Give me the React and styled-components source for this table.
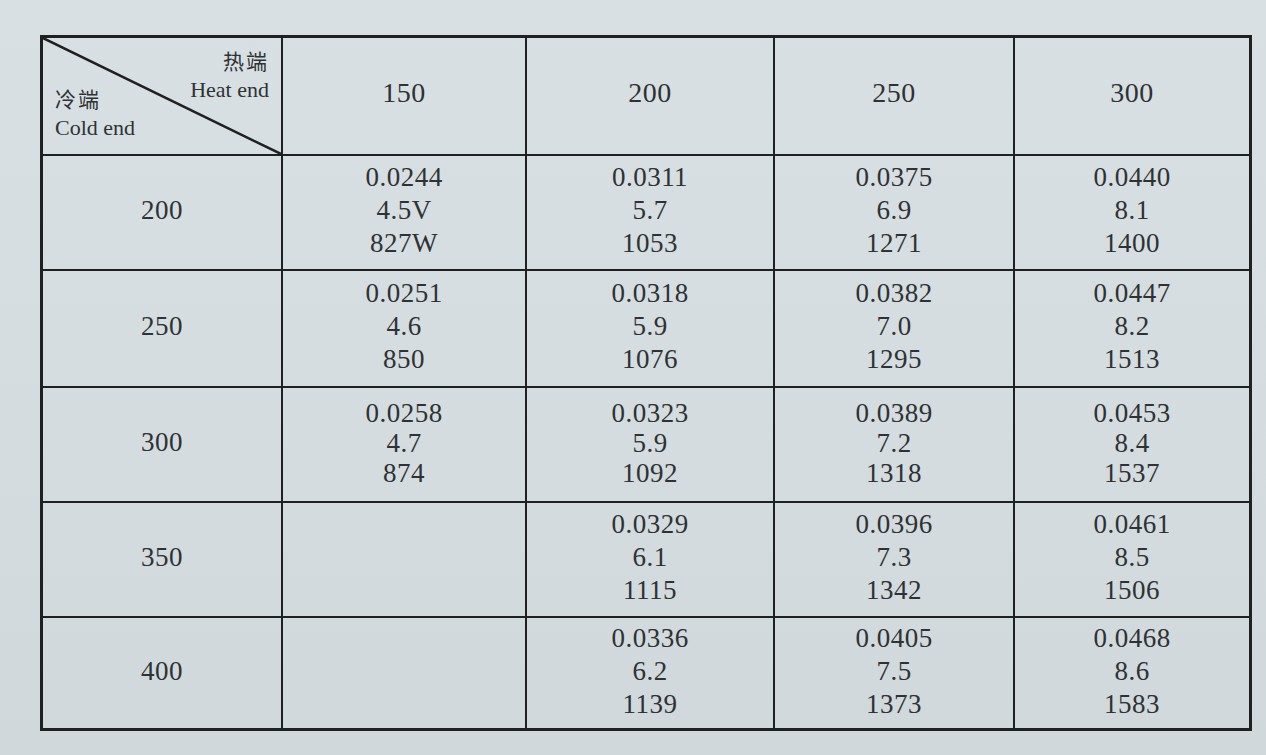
import React from "react";
import styled, { createGlobalStyle } from "styled-components";

const GlobalStyle = createGlobalStyle`
  html, body {
    margin: 0;
    padding: 0;
    background: #d6dee1;
  }
  body {
    width: 1266px;
    height: 755px;
    overflow: hidden;
    font-family: "Liberation Serif", "Noto Sans CJK SC", serif;
    color: #2f3234;
  }
`;

const Page = styled.div`
  width: 1266px;
  height: 755px;
  padding: 35px 14px 0 40px;
  box-sizing: border-box;
  background: linear-gradient(180deg, #d9e0e3 0%, #d4dcdf 60%, #d0d8db 100%);
`;

const Table = styled.div`
  display: grid;
  grid-template-columns: 240px 244px 248px 240px 1fr;
  grid-template-rows: 118px 115px 117px 115px 115px 110px;
  border: 3px solid #1e2022;
  box-sizing: border-box;
  width: 1212px;
`;

const Cell = styled.div`
  position: relative;
  display: flex;
  flex-direction: column;
  align-items: center;
  justify-content: center;
  border-right: ${(p) => (p.$last ? "none" : "2px solid #1e2022")};
  border-bottom: ${(p) => (p.$bottom ? "none" : "2px solid #1e2022")};
  font-size: 27px;
  line-height: ${(p) => (p.$tight ? "30px" : "33px")};
  letter-spacing: 0.5px;
  padding-bottom: 4px;
`;

const HeadCell = styled(Cell)`
  font-size: 28px;
  padding-bottom: 8px;
`;

const Corner = styled.div`
  position: relative;
  border-right: 2px solid #1e2022;
  border-bottom: 2px solid #1e2022;
  display: grid;
  grid-template-columns: 1fr 1fr;
  padding: 8px 12px 0 12px;
  font-size: 22px;
  line-height: 29px;
`;

const Diagonal = styled.svg`
  position: absolute;
  inset: 0;
  width: 100%;
  height: 100%;
`;

const CornerLabel = styled.div`
  display: flex;
  flex-direction: column;
  align-items: ${(p) => (p.$right ? "flex-end" : "flex-start")};
  margin-top: ${(p) => (p.$right ? "0" : "38px")};
  white-space: nowrap;
`;

const Cjk = styled.span`
  font-family: "Noto Sans CJK SC", serif;
  font-size: 21px;
  letter-spacing: 2px;
`;

const heat = ["150", "200", "250", "300"];

const rows = [
  {
    cold: "200",
    cells: [
      ["0.0244", "4.5V", "827W"],
      ["0.0311", "5.7", "1053"],
      ["0.0375", "6.9", "1271"],
      ["0.0440", "8.1", "1400"],
    ],
  },
  {
    cold: "250",
    cells: [
      ["0.0251", "4.6", "850"],
      ["0.0318", "5.9", "1076"],
      ["0.0382", "7.0", "1295"],
      ["0.0447", "8.2", "1513"],
    ],
  },
  {
    cold: "300",
    tight: true,
    cells: [
      ["0.0258", "4.7", "874"],
      ["0.0323", "5.9", "1092"],
      ["0.0389", "7.2", "1318"],
      ["0.0453", "8.4", "1537"],
    ],
  },
  {
    cold: "350",
    cells: [
      null,
      ["0.0329", "6.1", "1115"],
      ["0.0396", "7.3", "1342"],
      ["0.0461", "8.5", "1506"],
    ],
  },
  {
    cold: "400",
    cells: [
      null,
      ["0.0336", "6.2", "1139"],
      ["0.0405", "7.5", "1373"],
      ["0.0468", "8.6", "1583"],
    ],
  },
];

function App() {
  return (
    <Page>
      <GlobalStyle />
      <Table>
        <Corner>
          <Diagonal viewBox="0 0 238 116" preserveAspectRatio="none">
            <line x1="0" y1="0" x2="238" y2="116" stroke="#1e2022" strokeWidth="2.5" />
          </Diagonal>
          <CornerLabel>
            <Cjk>冷端</Cjk>
            <span>Cold end</span>
          </CornerLabel>
          <CornerLabel $right>
            <Cjk>热端</Cjk>
            <span>Heat end</span>
          </CornerLabel>
        </Corner>
        {heat.map((h, i) => (
          <HeadCell key={h} $last={i === heat.length - 1}>
            {h}
          </HeadCell>
        ))}
        {rows.map((row, r) => {
          const bottom = r === rows.length - 1;
          return (
            <React.Fragment key={row.cold}>
              <Cell $bottom={bottom}>{row.cold}</Cell>
              {row.cells.map((c, i) => (
                <Cell
                  key={i}
                  $bottom={bottom}
                  $last={i === row.cells.length - 1}
                  $tight={row.tight}
                >
                  {c && c.map((v) => <span key={v}>{v}</span>)}
                </Cell>
              ))}
            </React.Fragment>
          );
        })}
      </Table>
    </Page>
  );
}

export default App;
